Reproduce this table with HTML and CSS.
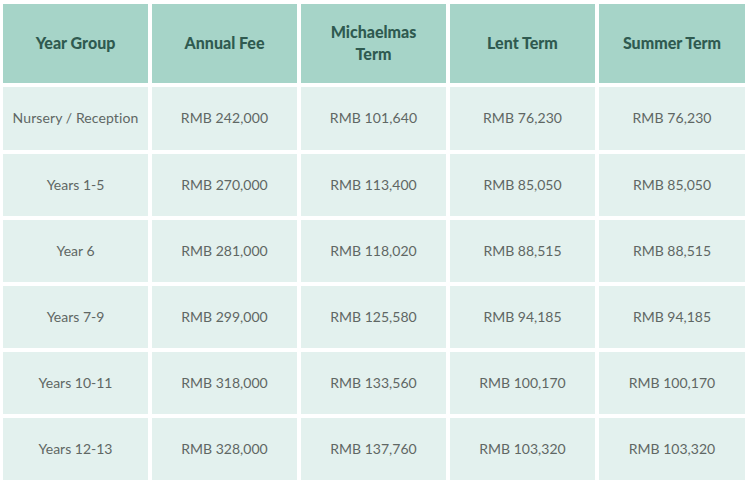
FILE: index.html
```html
<!DOCTYPE html>
<html lang="en">
<head>
<meta charset="utf-8">
<title>Fees</title>
<link rel="stylesheet" href="styles.css">
</head>
<body>
<div class="fees">
  <div class="cell head">Year Group</div>
  <div class="cell head">Annual Fee</div>
  <div class="cell head">Michaelmas<br>Term</div>
  <div class="cell head">Lent Term</div>
  <div class="cell head">Summer Term</div>

  <div class="cell first">Nursery / Reception</div>
  <div class="cell first">RMB 242,000</div>
  <div class="cell first">RMB 101,640</div>
  <div class="cell first">RMB 76,230</div>
  <div class="cell first">RMB 76,230</div>

  <div class="cell">Years 1-5</div>
  <div class="cell">RMB 270,000</div>
  <div class="cell">RMB 113,400</div>
  <div class="cell">RMB 85,050</div>
  <div class="cell">RMB 85,050</div>

  <div class="cell">Year 6</div>
  <div class="cell">RMB 281,000</div>
  <div class="cell">RMB 118,020</div>
  <div class="cell">RMB 88,515</div>
  <div class="cell">RMB 88,515</div>

  <div class="cell">Years 7-9</div>
  <div class="cell">RMB 299,000</div>
  <div class="cell">RMB 125,580</div>
  <div class="cell">RMB 94,185</div>
  <div class="cell">RMB 94,185</div>

  <div class="cell">Years 10-11</div>
  <div class="cell">RMB 318,000</div>
  <div class="cell">RMB 133,560</div>
  <div class="cell">RMB 100,170</div>
  <div class="cell">RMB 100,170</div>

  <div class="cell">Years 12-13</div>
  <div class="cell">RMB 328,000</div>
  <div class="cell">RMB 137,760</div>
  <div class="cell">RMB 103,320</div>
  <div class="cell">RMB 103,320</div>
</div>
</body>
</html>
```
FILE: styles.css
```css
html, body {
  margin: 0;
  padding: 0;
  background: #ffffff;
}
.fees {
  display: grid;
  grid-template-columns: 145px 145px 145px 145px 146px;
  grid-template-rows: 79px 63px 62px 62px 62px 62px 62px;
  column-gap: 4px;
  row-gap: 4px;
  padding: 4px 0 0 3px;
  font-family: "Lato", "Open Sans", sans-serif;
}
.cell {
  display: flex;
  align-items: center;
  justify-content: center;
  text-align: center;
  background: #e3f1ee;
  color: #5f6764;
  font-size: 14px;
  line-height: 22px;
  padding-bottom: 1px;
}
.first {
  letter-spacing: 0.1px;
}
.head {
  background: #a6d4c8;
  color: #2f5a50;
  font-size: 16px;
  font-weight: 900;
  padding-bottom: 2px;
}
```
